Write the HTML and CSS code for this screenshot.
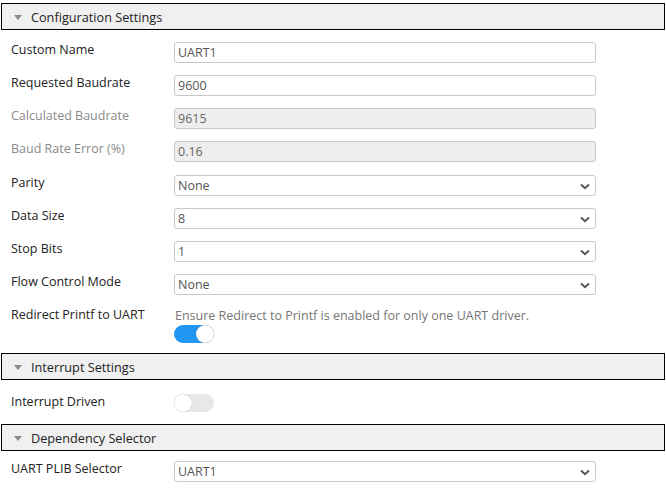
FILE: index.html
```html
<!DOCTYPE html>
<html>
<head>
<meta charset="utf-8">
<link rel="stylesheet" href="styles.css">
</head>
<body>
<div class="panel">
  <div class="section-head"><span class="caret"></span><span class="title">Configuration Settings</span></div>
  <div class="section-body first">
    <div class="row"><div class="label">Custom Name</div><div class="field"><div class="input">UART1</div></div></div>
    <div class="row"><div class="label">Requested Baudrate</div><div class="field"><div class="input">9600</div></div></div>
    <div class="row"><div class="label disabled">Calculated Baudrate</div><div class="field"><div class="input readonly">9615</div></div></div>
    <div class="row"><div class="label disabled">Baud Rate Error (%)</div><div class="field"><div class="input readonly">0.16</div></div></div>
    <div class="row"><div class="label">Parity</div><div class="field"><div class="input select">None<svg class="chev" width="10" height="7" viewBox="0 0 10 7"><path d="M1 1.5 L5 5.2 L9 1.5" fill="none" stroke="#555" stroke-width="2"/></svg></div></div></div>
    <div class="row"><div class="label">Data Size</div><div class="field"><div class="input select">8<svg class="chev" width="10" height="7" viewBox="0 0 10 7"><path d="M1 1.5 L5 5.2 L9 1.5" fill="none" stroke="#555" stroke-width="2"/></svg></div></div></div>
    <div class="row"><div class="label">Stop Bits</div><div class="field"><div class="input select">1<svg class="chev" width="10" height="7" viewBox="0 0 10 7"><path d="M1 1.5 L5 5.2 L9 1.5" fill="none" stroke="#555" stroke-width="2"/></svg></div></div></div>
    <div class="row"><div class="label">Flow Control Mode</div><div class="field"><div class="input select">None<svg class="chev" width="10" height="7" viewBox="0 0 10 7"><path d="M1 1.5 L5 5.2 L9 1.5" fill="none" stroke="#555" stroke-width="2"/></svg></div></div></div>
    <div class="row"><div class="label">Redirect Printf to UART</div><div class="field"><div class="note">Ensure Redirect to Printf is enabled for only one UART driver.</div><div class="toggle on"><span class="knob"></span></div></div></div>
  </div>
  <div class="section-head"><span class="caret"></span><span class="title">Interrupt Settings</span></div>
  <div class="section-body second">
    <div class="row"><div class="label">Interrupt Driven</div><div class="field"><div class="toggle off"><span class="knob"></span></div></div></div>
  </div>
  <div class="section-head"><span class="caret"></span><span class="title">Dependency Selector</span></div>
  <div class="section-body third">
    <div class="row"><div class="label">UART PLIB Selector</div><div class="field"><div class="input select">UART1<svg class="chev" width="10" height="7" viewBox="0 0 10 7"><path d="M1 1.5 L5 5.2 L9 1.5" fill="none" stroke="#555" stroke-width="2"/></svg></div></div></div>
  </div>
</div>
</body>
</html>
```
FILE: styles.css
```css
html, body {
  margin: 0;
  padding: 0;
  background: #fff;
}
body {
  font-family: "Open Sans", "Noto Sans", sans-serif;
  font-size: 12.5px;
  color: #333;
}
.panel {
  padding: 3px 1px 0 1px;
}
.section-head {
  height: 25px;
  border: 1px solid #000;
  background: #f0f0f0;
  display: flex;
  align-items: center;
  padding-left: 12px;
}
.caret {
  width: 0;
  height: 0;
  border-left: 4.5px solid transparent;
  border-right: 4.5px solid transparent;
  border-top: 5px solid #8a8a8a;
  margin-right: 9px;
  margin-top: 1px;
}
.title {
  font-size: 12.7px;
  color: #222;
}
.section-body {
  padding: 12px 0 10px 10px;
  display: flex;
  flex-direction: column;
  gap: 12.15px;
}
.section-body.second {
  padding-top: 14px;
  padding-bottom: 12px;
}
.section-body.third {
  padding-top: 10px;
}
.row {
  display: grid;
  grid-template-columns: 163px 422px;
  align-items: start;
}
.label {
  line-height: 16px;
  color: #222;
}
.label.disabled {
  color: #8a8a8a;
}
.field {
  display: flex;
  flex-direction: column;
}
.input {
  box-sizing: border-box;
  height: 21px;
  border: 1px solid #c8c8c8;
  border-radius: 3px;
  padding: 0 0 0 3px;
  line-height: 20px;
  color: #555;
  background: #fff;
  position: relative;
}
.input.readonly {
  background: #eeeeee;
  color: #666;
}
.chev {
  position: absolute;
  right: 5px;
  top: 7px;
}
.note {
  color: #777;
  line-height: 17px;
  padding-left: 1px;
}
.toggle {
  width: 40px;
  height: 18px;
  border-radius: 9px;
  position: relative;
  margin-top: 1px;
}
.toggle.on {
  background: #2196f3;
}
.toggle.off {
  background: #e8e8e8;
  margin-top: 0;
}
.knob {
  position: absolute;
  top: 0;
  width: 18px;
  height: 18px;
  border-radius: 50%;
  background: #fff;
  box-shadow: 0 0 1px rgba(0,0,0,0.35);
}
.toggle.on .knob {
  right: 0;
}
.toggle.off .knob {
  left: 0;
}
```
